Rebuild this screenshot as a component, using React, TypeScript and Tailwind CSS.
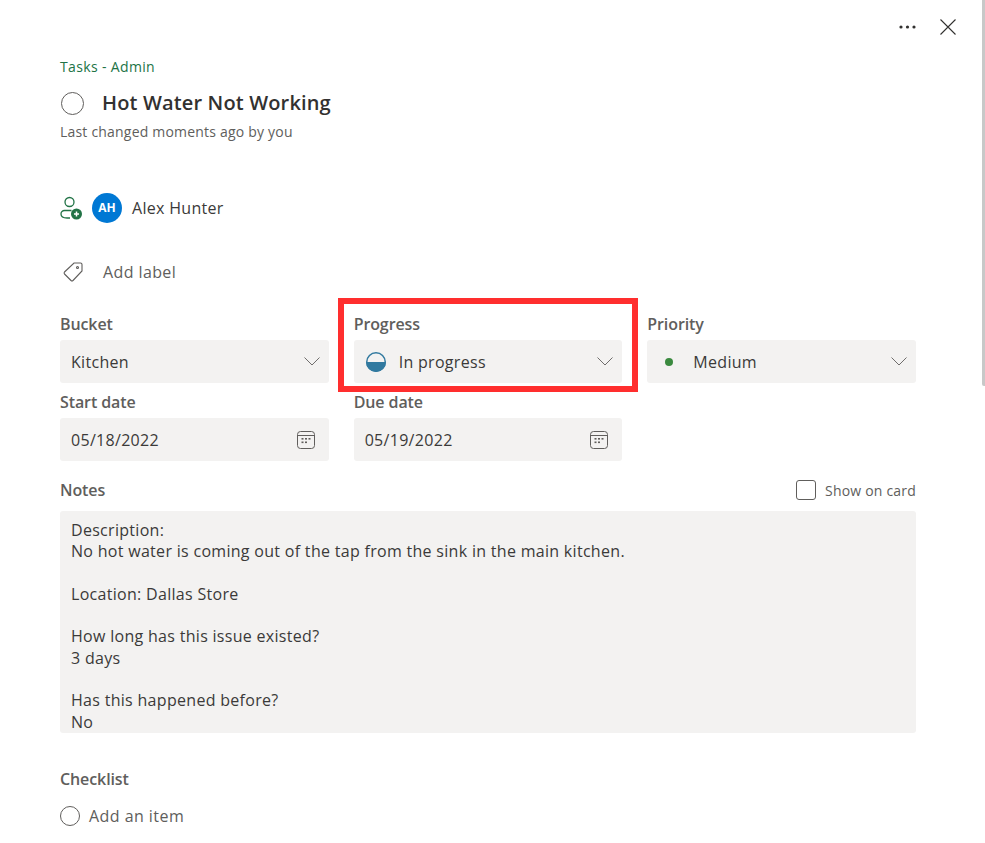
import React from "react";

const font = "font-['Open_Sans','Noto_Sans',sans-serif]";

const CalendarIcon = () => (
  <svg width="20" height="20" viewBox="0 0 20 20" fill="none" className="text-[#605e5c]">
    <rect x="1.5" y="1.5" width="17" height="17" rx="3" stroke="currentColor" />
    <path d="M2 5.5h16" stroke="currentColor" />
    <g fill="currentColor">
      <rect x="5.5" y="8" width="2" height="1.6" />
      <rect x="9" y="8" width="2" height="1.6" />
      <rect x="12.5" y="8" width="2" height="1.6" />
      <rect x="5.5" y="11.5" width="2" height="1.6" />
      <rect x="9" y="11.5" width="2" height="1.6" />
    </g>
  </svg>
);

const Chevron = () => (
  <svg width="16" height="9" viewBox="0 0 16 9" fill="none" stroke="#605e5c" strokeWidth="0.9" className="mr-[1px]">
    <path d="M.5.5 8 8l7.5-7.5" />
  </svg>
);

const Field = ({
  label,
  value,
  icon,
  date,
}: {
  label: string;
  value: string;
  icon?: React.ReactNode;
  date?: boolean;
}) => (
  <div>
    <div className="h-[24px] text-[16px] leading-[24px] font-semibold tracking-[-0.1px] text-[#605e5c]">{label}</div>
    <div className="mt-[4px] flex h-[43px] items-center rounded-[3px] bg-[#f3f2f1] pl-[11px] pr-[8px] text-[16px] tracking-[0.3px] text-[#3b3a39]">
      {icon}
      <span className="flex-1">{value}</span>
      {date ? (
        <span className="mr-[5px] flex"><CalendarIcon /></span>
      ) : (
        <Chevron />
      )}
    </div>
  </div>
);

export default function App() {
  return (
    <div className={`relative h-[843px] w-[985px] overflow-hidden bg-white ${font}`}>
      {/* scrollbar */}
      <div className="absolute right-0 top-0 h-[386px] w-[3px] rounded-bl-[2px] bg-[#c8c8c8]" />

      {/* top actions */}
      <div className="flex h-[54px] items-center justify-end gap-[24px] pr-[29px]">
        <svg width="17" height="4" viewBox="0 0 17 4" fill="#323130">
          <circle cx="2" cy="2" r="1.6" />
          <circle cx="8.5" cy="2" r="1.6" />
          <circle cx="15" cy="2" r="1.6" />
        </svg>
        <svg width="16" height="16" viewBox="0 0 16 16" stroke="#323130" strokeWidth="1.1">
          <path d="M.5.5l15 15M15.5.5l-15 15" />
        </svg>
      </div>

      <div className="w-[856px] ml-[60px]">
        <div className="h-[26px] text-[14px] leading-[26px] tracking-[0.35px] text-[#217346]">Tasks - Admin</div>

        <div className="mt-[8px] flex h-[30px] items-center">
          <div className="h-[23px] w-[23px] rounded-full border-[1.5px] border-[#605e5c] ml-[1px]" />
          <div className="ml-[18px] text-[20px] font-semibold tracking-[0.15px] text-[#323130]">Hot Water Not Working</div>
        </div>

        <div className="mt-[4px] text-[14px] leading-[20px] tracking-[0.2px] text-[#605e5c]">Last changed moments ago by you</div>

        <div className="mt-[50px] flex h-[32px] items-center">
          <svg width="23" height="24" viewBox="0 0 23 24" fill="none" stroke="#217346" strokeWidth="1.3">
            <circle cx="9.5" cy="6" r="4.5" />
            <path d="M11.5 14.5H4.5A3.5 3.5 0 0 0 1 18c0 2.5 2.5 4 6 4h3" />
            <circle cx="16.5" cy="18" r="5.5" fill="#217346" stroke="none" />
            <path d="M16.5 15.5v5M14 18h5" stroke="#fff" strokeWidth="1.5" />
          </svg>
          <div className="ml-[9px] flex h-[30px] w-[30px] items-center justify-center rounded-full bg-[#0078d4] text-[12px] font-bold text-white">
            AH
          </div>
          <div className="ml-[10px] text-[16px] tracking-[0.3px] text-[#3b3a39]">Alex Hunter</div>
        </div>

        <div className="mt-[32px] flex h-[32px] items-center">
          <svg width="22" height="22" viewBox="0 0 22 22" fill="none" stroke="#605e5c" strokeWidth="1.1" className="ml-[2px]">
            <path d="M12 2h6.5A1.5 1.5 0 0 1 20 3.5V10l-9 9.5a1.5 1.5 0 0 1-2 0L2.5 13a1.5 1.5 0 0 1 0-2z" />
            <circle cx="15.5" cy="6.5" r="1" />
          </svg>
          <div className="ml-[19px] text-[16px] tracking-[0.4px] text-[#605e5c]">Add label</div>
        </div>

        <div className="relative mt-[24px] grid grid-cols-3 gap-x-[25px] gap-y-[7px]">
          <Field label="Bucket" value="Kitchen" />
          <div className="relative">
            <Field
              label="Progress"
              value="In progress"
              icon={
                <span className="mr-[13px] ml-[1px] flex">
                  <svg width="20" height="20" viewBox="0 0 20 20" fill="none">
                    <circle cx="10" cy="10" r="9.25" stroke="#31799f" strokeWidth="1.5" />
                    <path d="M0 10h20a10 10 0 0 1-20 0z" fill="#31799f" />
                  </svg>
                </span>
              }
            />
            {/* highlight box drawn on the screenshot */}
            <div className="absolute -left-[16px] -right-[16px] -top-[14px] -bottom-[9px] border-[6px] border-[#ff2e2e]" />
          </div>
          <Field
            label="Priority"
            value="Medium"
            icon={<span className="ml-[7px] mr-[20px] h-[8px] w-[8px] rounded-full bg-[#3a8a3f]" />}
          />
          <Field label="Start date" value="05/18/2022" date />
          <Field label="Due date" value="05/19/2022" date />
        </div>

        <div className="mt-[14px] flex h-[30px] items-center justify-between">
          <div className="text-[16px] font-semibold tracking-[-0.1px] text-[#605e5c]">Notes</div>
          <div className="flex items-center">
            <div className="h-[20px] w-[20px] rounded-[3px] border border-[#605e5c]" />
            <div className="ml-[9px] text-[14px] tracking-[0.2px] text-[#605e5c]">Show on card</div>
          </div>
        </div>

        <div className="mt-[6px] h-[222px] overflow-hidden rounded-[3px] bg-[#f3f2f1] px-[11px] pt-[8.6px] text-[16px] leading-[21.33px] tracking-[0.3px] text-[#3b3a39] whitespace-pre-line">
          {`Description:
No hot water is coming out of the tap from the sink in the main kitchen.

Location: Dallas Store

How long has this issue existed?
3 days

Has this happened before?
No`}
        </div>

        <div className="mt-[34px] h-[24px] text-[16px] leading-[24px] font-semibold tracking-[-0.1px] text-[#605e5c]">Checklist</div>

        <div className="mt-[13px] flex h-[24px] items-center">
          <div className="h-[20px] w-[20px] rounded-full border border-[#605e5c]" />
          <div className="ml-[9px] text-[16px] tracking-[0.45px] text-[#605e5c]">Add an item</div>
        </div>
      </div>
    </div>
  );
}
